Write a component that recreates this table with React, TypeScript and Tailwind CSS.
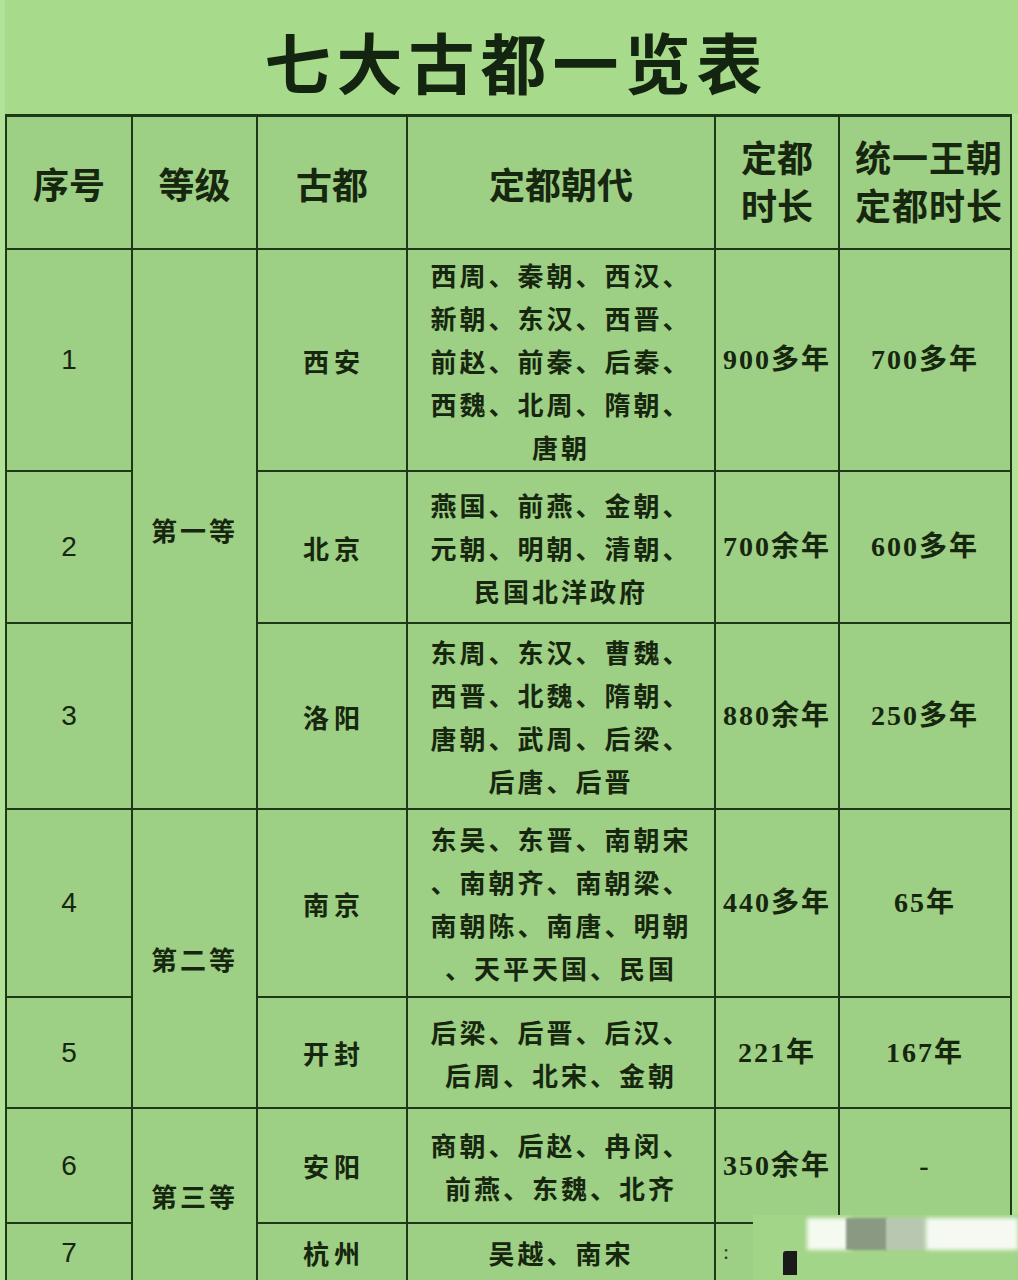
import React from 'react';

const cjk = "font-['Noto_Sans_CJK_SC','Noto_Sans',sans-serif]";
const serifNum = "font-['Liberation_Serif','Noto_Sans_CJK_SC',serif]";

type Row = {
  no: string;
  city: string;
  dyn: string[];
  len: string;
  uni: string;
};

const rows: Row[] = [
  { no: '1', city: '西安', dyn: ['西周、秦朝、西汉、', '新朝、东汉、西晋、', '前赵、前秦、后秦、', '西魏、北周、隋朝、', '唐朝'], len: '900多年', uni: '700多年' },
  { no: '2', city: '北京', dyn: ['燕国、前燕、金朝、', '元朝、明朝、清朝、', '民国北洋政府'], len: '700余年', uni: '600多年' },
  { no: '3', city: '洛阳', dyn: ['东周、东汉、曹魏、', '西晋、北魏、隋朝、', '唐朝、武周、后梁、', '后唐、后晋'], len: '880余年', uni: '250多年' },
  { no: '4', city: '南京', dyn: ['东吴、东晋、南朝宋', '、南朝齐、南朝梁、', '南朝陈、南唐、明朝', '、天平天国、民国'], len: '440多年', uni: '65年' },
  { no: '5', city: '开封', dyn: ['后梁、后晋、后汉、', '后周、北宋、金朝'], len: '221年', uni: '167年' },
  { no: '6', city: '安阳', dyn: ['商朝、后赵、冉闵、', '前燕、东魏、北齐'], len: '350余年', uni: '-' },
  { no: '7', city: '杭州', dyn: ['吴越、南宋'], len: '', uni: '' },
];

const rowH = ['h-[220px]', 'h-[150px]', 'h-[184px]', 'h-[186px]', 'h-[109px]', 'h-[113px]', 'h-[57px]'];
const levels = [
  { text: '第一等', span: 'row-span-3' },
  { text: '第二等', span: 'row-span-2' },
  { text: '第三等', span: 'row-span-2' },
];
const levelAt: Record<number, number> = { 0: 0, 3: 1, 5: 2 };

const cell = 'bg-[#9dcf85] flex items-center justify-center text-center text-[#17260f]';
const body = `${cjk} text-[26px] font-bold tracking-[3px]`;
const head = `${cjk} text-[36px] font-bold`;

export default function App() {
  return (
    <div className="relative w-[1018px] h-[1280px] overflow-hidden bg-[#b2e298] pl-[5px]">
      <div className={`h-[114px] bg-[#a8da8c] flex items-center justify-center ${cjk}`}>
        <h1 className="text-[66px] font-bold tracking-[6px] text-[#132410] leading-none pl-[10px] pt-[6px]">七大古都一览表</h1>
      </div>
      <div className="w-[1007px] bg-[#1d3a18] border-t-[3px] border-x-2 border-[#1d3a18] grid gap-[2px] grid-cols-[124px_123px_148px_306px_122px_170px] content-start">
        {/* header */}
        <div className={`${cell} h-[131px] ${head}`}>序号</div>
        <div className={`${cell} ${head}`}>等级</div>
        <div className={`${cell} ${head}`}>古都</div>
        <div className={`${cell} ${head}`}>定都朝代</div>
        <div className={`${cell} ${head} leading-[48px]`}>
          <div className="pb-[6px]">定都<br />时长</div>
        </div>
        <div className={`${cell} ${head} leading-[48px]`}>
          <div className="pb-[6px] pl-[8px] tracking-[1px] whitespace-nowrap">统一王朝<br />定都时长</div>
        </div>
        {rows.map((r, i) => (
          <React.Fragment key={r.no}>
            <div className={`${cell} ${rowH[i]} font-['Liberation_Sans',sans-serif] text-[28px]`}>{r.no}</div>
            {levelAt[i] !== undefined && (
              <div className={`${cell} ${levels[levelAt[i]].span} ${body}`}>{levels[levelAt[i]].text}</div>
            )}
            <div className={`${cell} ${body} tracking-[5px] pl-[4px]`}>{r.city}</div>
            <div className={`${cell} ${body} leading-[43px] flex-col`}>
              {r.dyn.map((l) => (
                <div key={l} className="whitespace-nowrap">{l}</div>
              ))}
            </div>
            <div className={`${cell} ${serifNum} text-[28px] font-bold tracking-[2px] whitespace-nowrap`}>{r.len}</div>
            <div className={`${cell} ${serifNum} text-[28px] font-bold tracking-[2px] whitespace-nowrap`}>{r.uni}</div>
          </React.Fragment>
        ))}
      </div>

      {/* watermark over the bottom-right corner */}
      <div className="absolute left-[753px] top-[1215px] w-[265px] h-[65px] bg-[#a3d589]">
        <div className="absolute left-[-30px] top-[20px] text-[22px] text-[#2a3a22] font-['Liberation_Serif',serif]">:</div>
        <div className="absolute left-[30px] top-[36px] w-[14px] h-[24px] bg-[#1a1a1a] rounded-tl-[3px]" />
        <div className="absolute left-[54px] top-[3px] w-[44px] h-[32px] bg-[#f4faf0] blur-[2px]" />
        <div className="absolute left-[93px] top-[3px] w-[42px] h-[32px] bg-[#8a9a82] blur-[1px]" />
        <div className="absolute left-[133px] top-[3px] w-[40px] h-[32px] bg-[#b8c8b0] blur-[1px]" />
        <div className="absolute left-[173px] top-[3px] w-[92px] h-[32px] bg-[#f5f9f2] blur-[2px]" />
      </div>
    </div>
  );
}
